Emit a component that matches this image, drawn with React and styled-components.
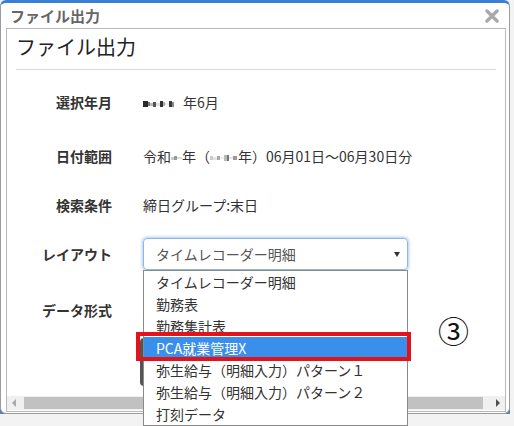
import styled, { createGlobalStyle } from "styled-components"

const GlobalStyle = createGlobalStyle`
  * { box-sizing: border-box; }
  body {
    margin: 0;
    background: #f3f3f3;
    font-family: "Noto Sans CJK JP", "Noto Sans", sans-serif;
  }
`

const Dialog = styled.div`
  position: relative;
  width: 510px;
  height: 414px;
  background: #fff;
  border: 1px solid #9c9c9c;
  border-top: 3px solid #3b7fd4;
  border-radius: 6px;
  box-shadow: 0 4px 0 #3b7fd4;
`

const TitleBar = styled.div`
  height: 25px;
  display: flex;
  align-items: center;
  justify-content: space-between;
  padding: 0 10px 0 9px;
  font-size: 15px;
  font-weight: bold;
  color: #666;
`

const Panel = styled.div`
  margin: 0 3px 0 5px;
  height: 384px;
  border: 1px solid #b8b8b8;
`

const Content = styled.div`
  height: 367px;
  padding: 4px 9px 0;
`

const Header = styled.h1`
  margin: 0;
  font-size: 20px;
  font-weight: 400;
  line-height: 28px;
  color: #222;
  padding-bottom: 8px;
  border-bottom: 1px solid #ddd;
`

const Form = styled.div`
  margin-top: 16px;
`

const Row = styled.div`
  display: grid;
  grid-template-columns: 96px 265px;
  column-gap: 31px;
  align-items: start;
  margin-top: ${p => p.$mt || 0}px;
`

const Label = styled.div`
  text-align: right;
  font-size: 14px;
  font-weight: bold;
  line-height: 32px;
  color: #333;
`

const Value = styled.div`
  font-size: 14px;
  line-height: 32px;
  color: #333;
  white-space: nowrap;
`

const Mosaic = styled.span`
  display: inline-flex;
  align-items: center;
  vertical-align: middle;
  height: 14px;
  margin: 0 ${p => p.$mr || 0}px 0 0;
`

const Cell = styled.span`
  display: inline-block;
  height: ${p => p.$h}px;
  width: ${p => p.$w}px;
  background: ${p => p.$c};
`

const Select = styled.div`
  position: relative;
  height: 32px;
  width: 265px;
  border: 1px solid #8fb6e8;
  border-radius: 4px;
  box-shadow: 0 0 3px 1px rgba(110, 160, 230, 0.55);
  padding-left: 12px;
  font-size: 14px;
  line-height: 30px;
  color: #555;
`

const Arrow = styled.span`
  position: absolute;
  right: 7px;
  top: 13px;
  width: 0;
  height: 0;
  border-left: 3px solid transparent;
  border-right: 3px solid transparent;
  border-top: 5px solid #333;
`

/* open options menu, floating over the page */
const List = styled.ul`
  position: fixed;
  top: 270px;
  left: 143px;
  width: 265px;
  margin: 0;
  padding: 0;
  list-style: none;
  background: #fff;
  border: 1px solid #8a8a8a;
  z-index: 20;
`

const Item = styled.li`
  height: 22px;
  line-height: 22px;
  padding-left: 12px;
  font-size: 14px;
  white-space: nowrap;
  color: ${p => (p.$active ? "#fff" : "#333")};
  background: ${p => (p.$active ? "#3a8eec" : "#fff")};
`

const Mark = styled.div`
  position: absolute;
  left: -8px;
  top: 61px;
  width: 275px;
  height: 29px;
  border: 4px solid #e3131b;
`

const OutButton = styled.div`
  margin: 44px 0 0 -3px;
  width: 110px;
  height: 48px;
  border-radius: 4px;
  background: #555;
`

const Note = styled.div`
  position: absolute;
  z-index: 3;
  left: 437px;
  top: 311px;
  font-size: 31px;
  line-height: 31px;
  color: #111;
`

const ScrollBar = styled.div`
  height: 14px;
  display: flex;
  align-items: center;
  background: #f0f0f0;
`

const ScrollArrow = styled.span`
  width: 14px;
  display: flex;
  justify-content: center;
  flex: none;
`

const Tri = styled.span`
  width: 0;
  height: 0;
  border-top: 4px solid transparent;
  border-bottom: 4px solid transparent;
  ${p => (p.$dir === "left"
    ? "border-right: 4px solid #a8a8a8;"
    : "border-left: 4px solid #505050;")}
`

const Thumb = styled.div`
  flex: 1;
  height: 12px;
  margin: 0 8px 0 3px;
  background: #c1c1c1;
`

const options = [
  "タイムレコーダー明細",
  "勤務表",
  "勤務集計表",
  "PCA就業管理X",
  "弥生給与（明細入力）パターン１",
  "弥生給与（明細入力）パターン２",
  "打刻データ",
]

const yearCells = [
  [5, 6, "#2a2a2a"], [2, 4, "#777"], [3, 3, "#bbb"], [3, 5, "#555"],
  [4, 3, "#e0e0e0"], [3, 6, "#333"], [2, 4, "#aaa"], [4, 2, "#eee"],
  [3, 6, "#3a3a3a"], [2, 5, "#888"],
]

const eraCells = [
  [3, 3, "#ccc"], [3, 4, "#999"], [5, 2, "#ddd"],
]

const seirekiCells = [
  [3, 4, "#ccc"], [4, 3, "#e5e5e5"], [3, 4, "#aaa"], [4, 2, "#eee"],
  [3, 6, "#bbb"], [2, 6, "#777"], [4, 2, "#e8e8e8"], [4, 4, "#999"],
]

const Blur = ({ cells, mr }) => (
  <Mosaic $mr={mr}>
    {cells.map(([w, h, c], i) => (
      <Cell key={i} $w={w} $h={h} $c={c} />
    ))}
  </Mosaic>
)

const CloseIcon = () => (
  <svg width="14" height="14" viewBox="0 0 14 14">
    <path d="M2 2 L12 12 M12 2 L2 12" stroke="#a9a9a9" strokeWidth="3.4" strokeLinecap="round" />
  </svg>
)

const App = () => (
  <>
    <GlobalStyle />
    <Dialog>
      <TitleBar>
        <span>ファイル出力</span>
        <CloseIcon />
      </TitleBar>
      <Panel>
        <Content>
          <Header>ファイル出力</Header>
          <Form>
            <Row>
              <Label>選択年月</Label>
              <Value>
                <Blur cells={yearCells} mr={9} />年6月
              </Value>
            </Row>
            <Row $mt={22}>
              <Label>日付範囲</Label>
              <Value>
                令和<Blur cells={eraCells} />年（<Blur cells={seirekiCells} mr={1} />年）06月01日～06月30日分
              </Value>
            </Row>
            <Row $mt={17}>
              <Label>検索条件</Label>
              <Value>締日グループ:末日</Value>
            </Row>
            <Row $mt={17}>
              <Label>レイアウト</Label>
              <Select>
                タイムレコーダー明細
                <Arrow />
              </Select>
            </Row>
            <Row $mt={24}>
              <Label>データ形式</Label>
              <OutButton />
            </Row>
          </Form>
        </Content>
        <ScrollBar>
          <ScrollArrow><Tri $dir="left" /></ScrollArrow>
          <Thumb />
          <ScrollArrow><Tri $dir="right" /></ScrollArrow>
        </ScrollBar>
      </Panel>
      <Note>③</Note>
    </Dialog>
    <List>
      {options.map((o, i) => (
        <Item key={o} $active={i === 3}>{o}</Item>
      ))}
      <Mark />
    </List>
  </>
)

export default App
